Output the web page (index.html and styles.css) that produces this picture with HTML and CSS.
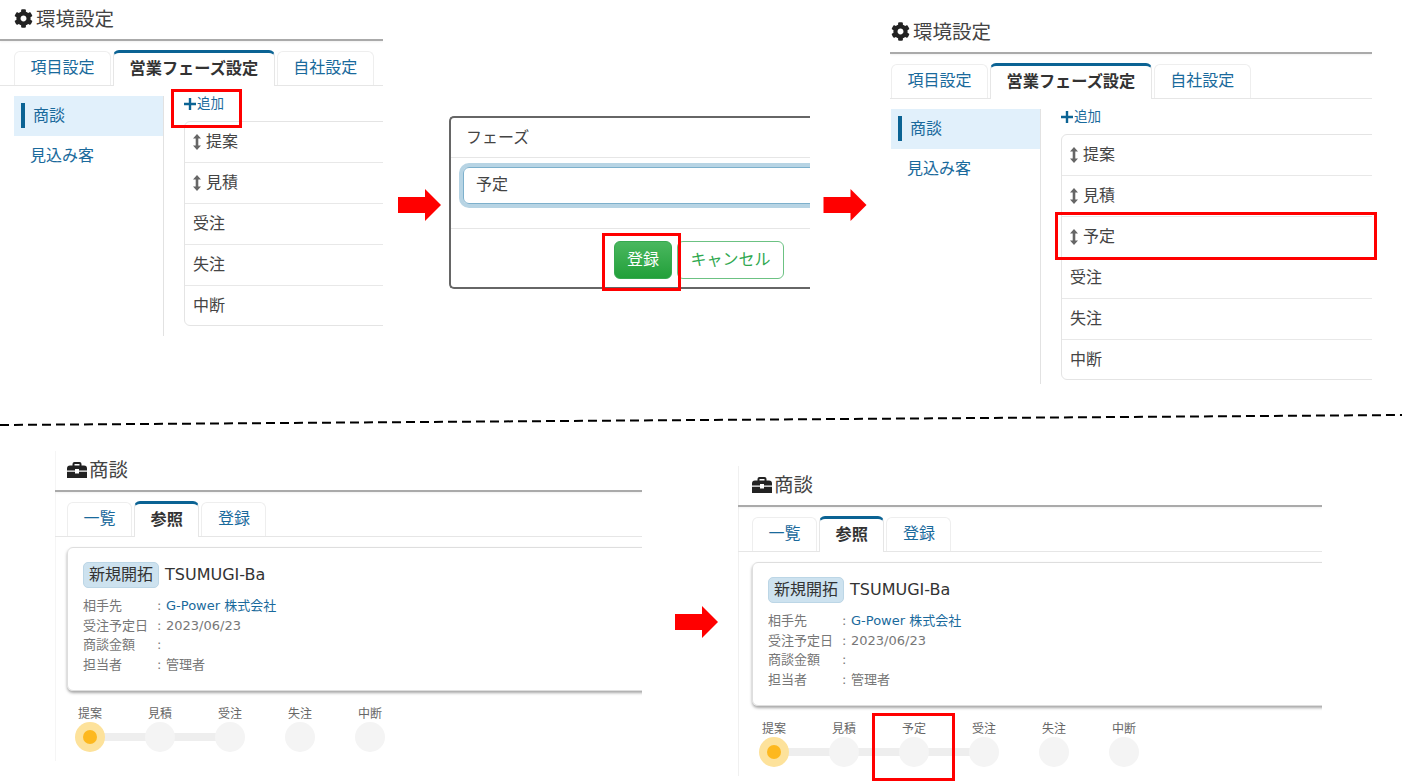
FILE: index.html
```html
<!DOCTYPE html>
<html lang="ja">
<head>
<meta charset="utf-8">
<title>営業フェーズ設定</title>
<link rel="stylesheet" href="styles.css">
</head>
<body>
<svg width="0" height="0" class="defs">
  <symbol id="gear" viewBox="0 0 512 512"><path d="M487.4 315.7l-42.6-24.6c4.3-23.2 4.3-47 0-70.2l42.6-24.6c4.9-2.8 7.1-8.6 5.5-14-11.1-35.6-30-67.8-54.7-94.6-3.8-4.1-10-5.1-14.8-2.3L380.8 110c-17.9-15.4-38.5-27.3-60.8-35.1V25.8c0-5.6-3.9-10.5-9.4-11.7-36.7-8.2-74.3-7.8-109.2 0-5.5 1.2-9.4 6.1-9.4 11.7V75c-22.2 7.9-42.8 19.8-60.8 35.1L88.7 85.5c-4.9-2.8-11-1.9-14.8 2.3-24.7 26.7-43.6 58.9-54.7 94.6-1.7 5.4.6 11.2 5.5 14L67.3 221c-4.3 23.2-4.3 47 0 70.2l-42.6 24.6c-4.9 2.8-7.1 8.6-5.5 14 11.1 35.6 30 67.8 54.7 94.6 3.8 4.1 10 5.1 14.8 2.3l42.6-24.6c17.9 15.4 38.5 27.3 60.8 35.1v49.2c0 5.6 3.9 10.5 9.4 11.7 36.7 8.2 74.3 7.8 109.2 0 5.5-1.2 9.4-6.1 9.4-11.7v-49.2c22.2-7.9 42.8-19.8 60.8-35.1l42.6 24.6c4.9 2.8 11 1.9 14.8-2.3 24.7-26.7 43.6-58.9 54.7-94.6 1.5-5.5-.7-11.3-5.6-14.1zM256 336c-44.1 0-80-35.9-80-80s35.9-80 80-80 80 35.9 80 80-35.9 80-80 80z"/></symbol>
  <symbol id="toolbox" viewBox="0 0 20 16"><path d="M5.500 3.500V2a2 2 0 0 1 2-2h5a2 2 0 0 1 2 2v1.500H17A3 3 0 0 1 20 6.500V8.500H12V7H8V8.500H0V6.500A3 3 0 0 1 3 3.500ZM7.500 3.500h5V2h-5Z"/><path d="M0 9.800H8V11.500H12V9.800H20V16H0Z"/></symbol>
  <symbol id="sort" viewBox="0 0 8 16"><path d="M4 0 8 4.500H5.300V11.500H8L4 16 0 11.500H2.700V4.500H0Z"/></symbol>
  <symbol id="plus" viewBox="0 0 12 12"><path d="M4.800 0H7.200V4.800H12V7.200H7.200V12H4.800V7.200H0V4.800H4.800Z"/></symbol>
  <symbol id="arrow" viewBox="0 0 43 32"><polygon points="0,8 27,8 27,0 43,16 27,32 27,24 0,24"/></symbol>
</svg>

<main class="canvas">
  <section class="panel panel-settings-before">
    <h1 class="page-title"><svg class="title-icon gear"><use href="#gear"/></svg>環境設定</h1>
    <nav class="tabs">
      <a class="tab">項目設定</a>
      <a class="tab tab-active">営業フェーズ設定</a>
      <a class="tab">自社設定</a>
    </nav>
    <div class="settings-body">
      <ul class="side-menu">
        <li class="side-item side-item-active">商談</li>
        <li class="side-item">見込み客</li>
      </ul>
      <div class="phase-col">
        <a class="add-link"><svg class="plus"><use href="#plus"/></svg>追加</a>
        <ul class="phase-list">
          <li class="phase"><svg class="sort"><use href="#sort"/></svg>提案</li>
          <li class="phase"><svg class="sort"><use href="#sort"/></svg>見積</li>
          <li class="phase">受注</li>
          <li class="phase">失注</li>
          <li class="phase">中断</li>
        </ul>
      </div>
    </div>
  </section>

  <svg class="arrow arrow-one"><use href="#arrow"/></svg>

  <section class="dialog">
    <header class="dialog-head">フェーズ</header>
    <div class="dialog-body"><div class="input-field">予定</div></div>
    <footer class="dialog-foot">
      <button class="btn btn-primary">登録</button>
      <button class="btn btn-outline">キャンセル</button>
    </footer>
  </section>

  <svg class="arrow arrow-two"><use href="#arrow"/></svg>

  <section class="panel panel-settings-after">
    <h1 class="page-title"><svg class="title-icon gear"><use href="#gear"/></svg>環境設定</h1>
    <nav class="tabs">
      <a class="tab">項目設定</a>
      <a class="tab tab-active">営業フェーズ設定</a>
      <a class="tab">自社設定</a>
    </nav>
    <div class="settings-body">
      <ul class="side-menu">
        <li class="side-item side-item-active">商談</li>
        <li class="side-item">見込み客</li>
      </ul>
      <div class="phase-col">
        <a class="add-link"><svg class="plus"><use href="#plus"/></svg>追加</a>
        <ul class="phase-list">
          <li class="phase"><svg class="sort"><use href="#sort"/></svg>提案</li>
          <li class="phase"><svg class="sort"><use href="#sort"/></svg>見積</li>
          <li class="phase"><svg class="sort"><use href="#sort"/></svg>予定</li>
          <li class="phase">受注</li>
          <li class="phase">失注</li>
          <li class="phase">中断</li>
        </ul>
      </div>
    </div>
  </section>

  <svg class="divider-line" viewBox="0 0 1402 781"><line x1="0" y1="425" x2="1402" y2="415"/></svg>

  <section class="panel panel-deal-before">
    <h1 class="page-title"><svg class="title-icon toolbox"><use href="#toolbox"/></svg>商談</h1>
    <nav class="tabs">
      <a class="tab">一覧</a>
      <a class="tab tab-active">参照</a>
      <a class="tab">登録</a>
    </nav>
    <article class="deal-card">
      <div class="deal-title"><span class="badge">新規開拓</span><span class="deal-name">TSUMUGI-Ba</span></div>
      <dl class="deal-info">
        <dt>相手先</dt><dd class="colon">:</dd><dd class="link">G-Power 株式会社</dd>
        <dt>受注予定日</dt><dd class="colon">:</dd><dd>2023/06/23</dd>
        <dt>商談金額</dt><dd class="colon">:</dd><dd></dd>
        <dt>担当者</dt><dd class="colon">:</dd><dd>管理者</dd>
      </dl>
    </article>
    <ol class="steps">
      <li class="step step-current step-linked"><span>提案</span><i class="dot"></i></li>
      <li class="step step-linked"><span>見積</span><i class="dot"></i></li>
      <li class="step"><span>受注</span><i class="dot"></i></li>
      <li class="step"><span>失注</span><i class="dot"></i></li>
      <li class="step"><span>中断</span><i class="dot"></i></li>
    </ol>
  </section>

  <svg class="arrow arrow-three"><use href="#arrow"/></svg>

  <section class="panel panel-deal-after">
    <h1 class="page-title"><svg class="title-icon toolbox"><use href="#toolbox"/></svg>商談</h1>
    <nav class="tabs">
      <a class="tab">一覧</a>
      <a class="tab tab-active">参照</a>
      <a class="tab">登録</a>
    </nav>
    <article class="deal-card">
      <div class="deal-title"><span class="badge">新規開拓</span><span class="deal-name">TSUMUGI-Ba</span></div>
      <dl class="deal-info">
        <dt>相手先</dt><dd class="colon">:</dd><dd class="link">G-Power 株式会社</dd>
        <dt>受注予定日</dt><dd class="colon">:</dd><dd>2023/06/23</dd>
        <dt>商談金額</dt><dd class="colon">:</dd><dd></dd>
        <dt>担当者</dt><dd class="colon">:</dd><dd>管理者</dd>
      </dl>
    </article>
    <ol class="steps">
      <li class="step step-current step-linked"><span>提案</span><i class="dot"></i></li>
      <li class="step step-linked"><span>見積</span><i class="dot"></i></li>
      <li class="step step-linked"><span>予定</span><i class="dot"></i></li>
      <li class="step"><span>受注</span><i class="dot"></i></li>
      <li class="step"><span>失注</span><i class="dot"></i></li>
      <li class="step"><span>中断</span><i class="dot"></i></li>
    </ol>
  </section>

  <div class="callout callout-add"></div>
  <div class="callout callout-save"></div>
  <div class="callout callout-row"></div>
  <div class="callout callout-step"></div>
</main>
</body>
</html>
```

FILE: styles.css
```css
* { box-sizing: border-box; }
html, body { margin: 0; padding: 0; background: #fff; }
body {
  font-family: "DejaVu Sans", "Noto Sans CJK JP", sans-serif;
  font-size: 16px;
  color: #444;
}
ul, ol, dl, dd, h1 { margin: 0; padding: 0; list-style: none; }
.defs { position: absolute; }

.canvas { position: relative; width: 1402px; height: 781px; overflow: hidden; }

/* Each screenshot is an item on a free canvas */
.panel { position: absolute; overflow: hidden; background: #fff; }
.panel-settings-before { left: 0; top: 0; width: 383px; height: 336px; --pad: 14px; }
.panel-settings-after { left: 890px; top: 13px; width: 482px; height: 371px; --pad: 1px; }
.panel-deal-before { left: 55px; top: 451px; width: 587px; height: 310px; --pad: 12px; --step-pad: 0px; box-shadow: inset 1px 0 #f5f5f5; }
.panel-deal-after { left: 738px; top: 466px; width: 584px; height: 310px; --pad: 14px; --step-pad: 1px; box-shadow: inset 1px 0 #f0f0f0; }

.page-title {
  display: flex;
  align-items: center;
  height: 41px;
  padding: 0 0 0 var(--pad);
  border-bottom: 2px solid #aaa;
  font-size: 19.5px;
  font-weight: 400;
  line-height: 1;
  color: #444;
  box-shadow: 0 1px 2px rgba(0, 0, 0, .06);
}
.title-icon { flex: none; fill: #222; margin-bottom: 2px; }
.gear { width: 19px; height: 19px; margin-right: 3px; }
.toolbox { width: 20px; height: 16px; margin-right: 2px; }

.tabs {
  display: flex;
  align-items: flex-end;
  gap: 2px;
  height: 36px;
  margin-top: 9px;
  padding-left: var(--pad);
  border-bottom: 1px solid #e6e6e6;
}
.tab {
  height: 34px;
  padding: 0 15.5px;
  border: 1px solid #eee;
  border-bottom: 0;
  border-radius: 6px 6px 0 0;
  font-size: 16px;
  line-height: 31px;
  color: #1a6a9c;
}
.tab-active {
  height: 36px;
  margin-bottom: -1px;
  border-top: 3px solid #0b6394;
  border-left-color: #e6e6e6;
  border-right-color: #e6e6e6;
  background: #fff;
  font-size: 16.2px;
  font-weight: 700;
  line-height: 32px;
  color: #333;
}

.settings-body { display: flex; margin-top: 10px; padding-left: var(--pad); height: 100%; }
.side-menu { flex: none; width: 150px; border-right: 1px solid #e2e2e2; }
.side-item {
  position: relative;
  height: 40px;
  padding-left: 16px;
  line-height: 40px;
  color: #1a6a9c;
}
.side-item-active {
  padding-left: 19px;
  background: #e1f0fb;
  color: #1a6a9c;
}
.side-item-active::before {
  content: "";
  position: absolute;
  left: 7px;
  top: 7px;
  width: 4px;
  height: 25px;
  background: #0b6394;
}

.phase-col { flex: 1; padding-left: 20px; margin-right: -10px; }
.add-link {
  display: flex;
  align-items: center;
  height: 25px;
  font-size: 13.5px;
  line-height: 1;
  color: #1a6a9c;
  padding-bottom: 9px;
}
.plus { width: 12px; height: 12px; margin-right: 1px; fill: #0b6394; }
.phase-list { border: 1px solid #e4e4e4; border-radius: 6px; }
.phase {
  display: flex;
  align-items: center;
  height: 41px;
  padding: 0 0 1px 8px;
  border-bottom: 1px solid #e8e8e8;
  line-height: 1;
}
.phase:last-child { height: 39px; padding-bottom: 0; border-bottom: 0; }
.sort { flex: none; width: 8px; height: 16px; margin-right: 5px; fill: #666; }

.arrow { position: absolute; width: 43px; height: 32px; fill: #f00; }
.arrow-one { left: 398px; top: 189px; }
.arrow-two { left: 823px; top: 189px; width: 44px; }
.arrow-three { left: 675px; top: 606px; }

.dialog {
  position: absolute;
  left: 449px;
  top: 116px;
  width: 361px;
  height: 173px;
  overflow: hidden;
  border: 2px solid #666;
  border-right: 0;
  border-radius: 5px 0 0 5px;
  background: #fff;
}
.dialog-head {
  height: 40px;
  padding-left: 15px;
  border-bottom: 1px solid #e6e6e6;
  line-height: 40px;
}
.dialog-body {
  height: 71px;
  padding: 9px 0 0 12px;
  border-bottom: 1px solid #e6e6e6;
}
.input-field {
  width: 370px;
  height: 37px;
  padding-left: 12px;
  border: 1px solid #7db0cc;
  border-radius: 6px;
  box-shadow: 0 0 0 4px #b7d4e4;
  line-height: 33px;
}
.dialog-foot { display: flex; gap: 5px; padding: 12px 0 0 163px; }
.btn {
  height: 38px;
  padding: 0;
  border-radius: 6px;
  font: inherit;
  line-height: 1;
}
.btn-primary {
  width: 58px;
  border: 1px solid #35a94f;
  background: linear-gradient(#4ab75f, #22a03a);
  color: #fff;
}
.btn-outline {
  width: 107px;
  border: 1px solid #6cc283;
  background: #fff;
  color: #2fa84f;
}

.divider-line { position: absolute; left: 0; top: 0; width: 1402px; height: 781px; pointer-events: none; }
.divider-line line { stroke: #000; stroke-width: 2; stroke-dasharray: 9 5; }

.deal-card {
  margin: 10px -10px 0 var(--pad);
  height: 144px;
  padding: 14px 0 0 15px;
  border: 1px solid #dedede;
  border-radius: 6px;
  box-shadow: 0 2px 3px rgba(0, 0, 0, .35);
}
.deal-title { display: flex; align-items: center; gap: 6px; color: #333; }
.deal-name { padding-bottom: 2px; }
.badge {
  padding: 0 5px;
  height: 26px;
  border: 1px solid #bcd6e6;
  border-radius: 5px;
  background: #cde2ef;
  line-height: 23px;
}
.deal-info {
  display: grid;
  grid-template-columns: 74px 9px auto;
  grid-auto-rows: 19.6px;
  margin-top: 8px;
  font-size: 13px;
  line-height: 19.6px;
  color: #777;
}
.deal-info dt { font-weight: 400; }
.link { color: #1a6a9c; }

.steps { display: flex; margin-top: 15px; padding-left: var(--step-pad); }
.step {
  position: relative;
  display: flex;
  flex-direction: column;
  align-items: center;
  width: 70px;
  font-size: 12px;
  line-height: 16px;
  color: #666;
}
.step span { height: 16px; }
.dot {
  position: relative;
  z-index: 1;
  width: 30px;
  height: 30px;
  border-radius: 50%;
  background: #f4f4f4;
}
.step-linked::after {
  content: "";
  position: absolute;
  left: 35px;
  top: 27px;
  width: 70px;
  height: 8px;
  background: #eee;
}
.step-current .dot { background: #fde29b; }
.step-current .dot::after {
  content: "";
  position: absolute;
  left: 8px;
  top: 8px;
  width: 14px;
  height: 14px;
  border-radius: 50%;
  background: #fdb81e;
}

.callout { position: absolute; border: 3px solid #f00; pointer-events: none; }
.callout-add { left: 171px; top: 89px; width: 71px; height: 39px; }
.callout-save { left: 602px; top: 233px; width: 79px; height: 58px; }
.callout-row { left: 1055px; top: 212px; width: 322px; height: 48px; }
.callout-step { left: 872px; top: 713px; width: 83px; height: 68px; }
```
